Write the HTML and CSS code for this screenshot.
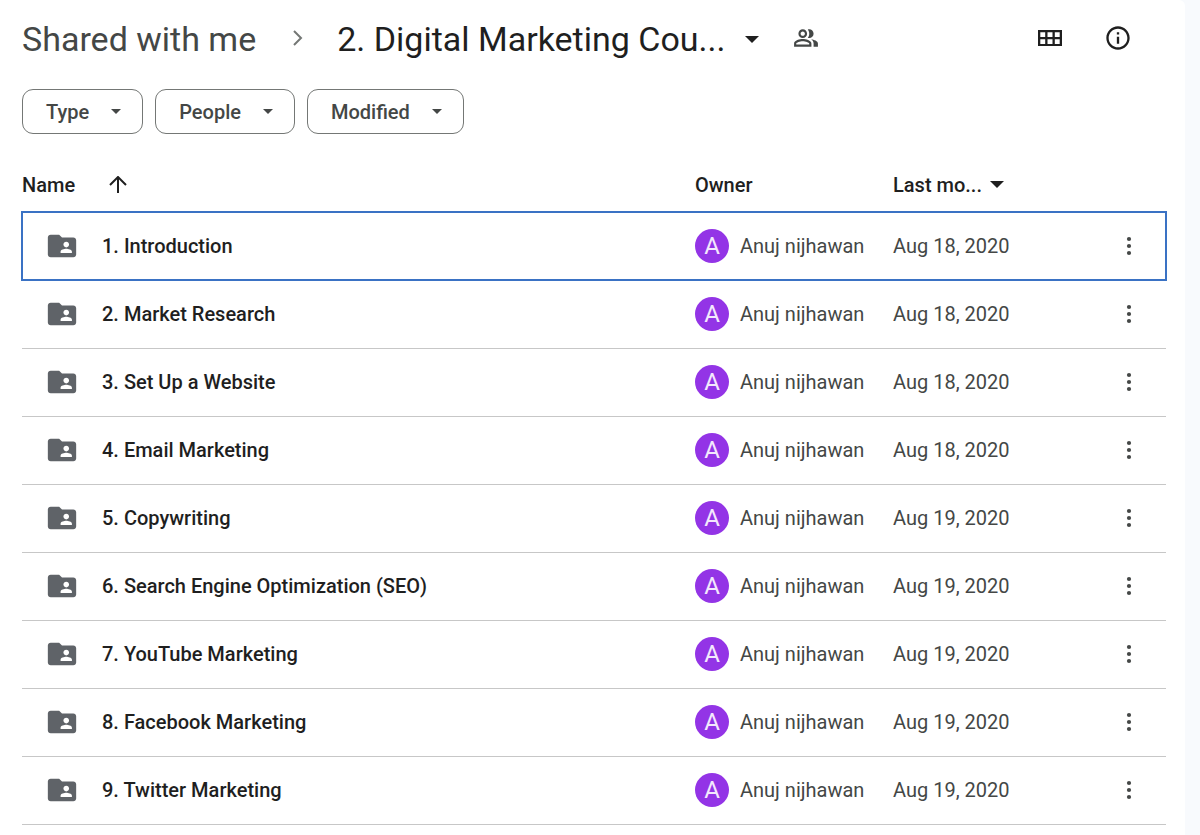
FILE: index.html
```html
<!DOCTYPE html>
<html lang="en">
  <head>
    <title>Shared with me</title>
    <meta charset="utf-8" />
    <link rel="stylesheet" href="styles.css">
  </head>
  <body>
    <!-- icons used more than once -->
    <svg class="sprite" aria-hidden="true">
      <symbol id="folder" viewBox="0 0 24 24">
        <path d="M20 6h-8l-2-2H4c-1.1 0-2 .9-2 2v12c0 1.1.9 2 2 2h16c1.1 0 2-.9 2-2V8c0-1.1-.9-2-2-2zm-5 3c1.1 0 2 .9 2 2s-.9 2-2 2-2-.9-2-2 .9-2 2-2zm4 8h-8v-1c0-1.33 2.67-2 4-2s4 .67 4 2v1z" />
      </symbol>
      <symbol id="more" viewBox="0 0 24 24">
        <circle cx="12" cy="6" r="1.8" />
        <circle cx="12" cy="12" r="1.8" />
        <circle cx="12" cy="18" r="1.8" />
      </symbol>
      <symbol id="caret" viewBox="0 0 10 5">
        <path d="M0 0h10L5 5z" />
      </symbol>
    </svg>

    <main class="panel">
      <header class="topbar">
        <nav class="crumbs">
          <a class="crumb" href="#">Shared with me</a>
          <svg class="chevron" viewBox="0 0 10 16"><path d="M1 1l7 7-7 7" /></svg>
          <button class="crumb current">
            2. Digital Marketing Cou...
            <svg class="caret-lg"><use href="#caret" /></svg>
          </button>
          <button class="icon-btn people" aria-label="Manage access">
            <svg class="icon-sm" viewBox="0 0 24 24">
              <path d="M16.67 13.13C18.04 14.06 19 15.32 19 17v3h4v-3c0-2.18-3.57-3.47-6.33-3.87zM15 12c2.21 0 4-1.79 4-4s-1.79-4-4-4c-.47 0-.91.1-1.33.24C14.5 5.27 15 6.58 15 8s-.5 2.73-1.33 3.76c.42.14.86.24 1.33.24zM9 12c2.21 0 4-1.79 4-4s-1.79-4-4-4-4 1.79-4 4 1.79 4 4 4zm0-6c1.1 0 2 .9 2 2s-.9 2-2 2-2-.9-2-2 .9-2 2-2zM9 13c-2.67 0-8 1.34-8 4v3h16v-3c0-2.66-5.33-4-8-4zm6 5H3v-.99C3.2 16.29 6.3 15 9 15s5.8 1.29 6 2v1z" />
            </svg>
          </button>
        </nav>
        <div class="actions">
          <button class="icon-btn" aria-label="Grid view">
            <svg class="icon" viewBox="0 0 28 28">
              <path d="M2 6h24v16H2zM4.300 8.200v4.700h4.900v-4.700zM11.500 8.200v4.700h5v-4.700zM18.800 8.200v4.700h4.900v-4.700zM4.300 15.200v4.700h4.900v-4.700zM11.500 15.200v4.700h5v-4.700zM18.800 15.200v4.700h4.900v-4.700z" fill-rule="evenodd" />
            </svg>
          </button>
          <button class="icon-btn" aria-label="View details">
            <svg class="icon" viewBox="0 0 24 24">
              <path d="M11 7h2v2h-2zm0 4h2v6h-2zm1-9C6.480 2 2 6.480 2 12s4.480 10 10 10 10-4.480 10-10S17.520 2 12 2zm0 18c-4.410 0-8-3.590-8-8s3.590-8 8-8 8 3.590 8 8-3.590 8-8 8z" />
            </svg>
          </button>
        </div>
      </header>

      <div class="filters">
        <button class="chip">Type <svg class="caret"><use href="#caret" /></svg></button>
        <button class="chip">People <svg class="caret"><use href="#caret" /></svg></button>
        <button class="chip">Modified <svg class="caret"><use href="#caret" /></svg></button>
      </div>

      <table class="files">
        <thead>
          <tr>
            <th class="col-name">
              <button class="sort">
                Name
                <svg class="arrow" viewBox="0 0 18 18"><path d="M9 17V2M1 9l8-8 8 8" /></svg>
              </button>
            </th>
            <th class="col-owner">Owner</th>
            <th class="col-date">
              <button class="sort date">Last mo... <svg class="caret-lg"><use href="#caret" /></svg></button>
            </th>
            <th class="col-menu"></th>
          </tr>
        </thead>
        <tbody>
          <tr class="selected">
            <td><a class="file" href="#"><svg class="folder"><use href="#folder" /></svg>1. Introduction</a></td>
            <td><div class="owner"><span class="avatar">A</span>Anuj nijhawan</div></td>
            <td>Aug 18, 2020</td>
            <td><button class="icon-btn" aria-label="More actions"><svg class="icon"><use href="#more" /></svg></button></td>
          </tr>
          <tr>
            <td><a class="file" href="#"><svg class="folder"><use href="#folder" /></svg>2. Market Research</a></td>
            <td><div class="owner"><span class="avatar">A</span>Anuj nijhawan</div></td>
            <td>Aug 18, 2020</td>
            <td><button class="icon-btn" aria-label="More actions"><svg class="icon"><use href="#more" /></svg></button></td>
          </tr>
          <tr>
            <td><a class="file" href="#"><svg class="folder"><use href="#folder" /></svg>3. Set Up a Website</a></td>
            <td><div class="owner"><span class="avatar">A</span>Anuj nijhawan</div></td>
            <td>Aug 18, 2020</td>
            <td><button class="icon-btn" aria-label="More actions"><svg class="icon"><use href="#more" /></svg></button></td>
          </tr>
          <tr>
            <td><a class="file" href="#"><svg class="folder"><use href="#folder" /></svg>4. Email Marketing</a></td>
            <td><div class="owner"><span class="avatar">A</span>Anuj nijhawan</div></td>
            <td>Aug 18, 2020</td>
            <td><button class="icon-btn" aria-label="More actions"><svg class="icon"><use href="#more" /></svg></button></td>
          </tr>
          <tr>
            <td><a class="file" href="#"><svg class="folder"><use href="#folder" /></svg>5. Copywriting</a></td>
            <td><div class="owner"><span class="avatar">A</span>Anuj nijhawan</div></td>
            <td>Aug 19, 2020</td>
            <td><button class="icon-btn" aria-label="More actions"><svg class="icon"><use href="#more" /></svg></button></td>
          </tr>
          <tr>
            <td><a class="file" href="#"><svg class="folder"><use href="#folder" /></svg>6. Search Engine Optimization (SEO)</a></td>
            <td><div class="owner"><span class="avatar">A</span>Anuj nijhawan</div></td>
            <td>Aug 19, 2020</td>
            <td><button class="icon-btn" aria-label="More actions"><svg class="icon"><use href="#more" /></svg></button></td>
          </tr>
          <tr>
            <td><a class="file" href="#"><svg class="folder"><use href="#folder" /></svg>7. YouTube Marketing</a></td>
            <td><div class="owner"><span class="avatar">A</span>Anuj nijhawan</div></td>
            <td>Aug 19, 2020</td>
            <td><button class="icon-btn" aria-label="More actions"><svg class="icon"><use href="#more" /></svg></button></td>
          </tr>
          <tr>
            <td><a class="file" href="#"><svg class="folder"><use href="#folder" /></svg>8. Facebook Marketing</a></td>
            <td><div class="owner"><span class="avatar">A</span>Anuj nijhawan</div></td>
            <td>Aug 19, 2020</td>
            <td><button class="icon-btn" aria-label="More actions"><svg class="icon"><use href="#more" /></svg></button></td>
          </tr>
          <tr>
            <td><a class="file" href="#"><svg class="folder"><use href="#folder" /></svg>9. Twitter Marketing</a></td>
            <td><div class="owner"><span class="avatar">A</span>Anuj nijhawan</div></td>
            <td>Aug 19, 2020</td>
            <td><button class="icon-btn" aria-label="More actions"><svg class="icon"><use href="#more" /></svg></button></td>
          </tr>
        </tbody>
      </table>
    </main>
  </body>
</html>
```
FILE: styles.css
```css
* {
  box-sizing: border-box;
}
body {
  margin: 0;
  background-color: #f8fafd;
  font-family: Roboto, "Open Sans", sans-serif;
  font-size: 20px;
  color: #1f1f1f;
}
a {
  color: inherit;
  text-decoration: none;
}
button {
  padding: 0;
  border: none;
  background: none;
  font: inherit;
  color: inherit;
  cursor: pointer;
}
svg {
  display: block;
  flex: none;
  fill: currentColor;
}
.sprite {
  display: none;
}

.panel {
  min-height: 100vh;
  margin-right: 15px;
  padding: 14px 19px 0 22px;
  background-color: #fff;
  border-top-right-radius: 6px;
}

/* breadcrumbs and view buttons */
.topbar {
  display: flex;
  justify-content: space-between;
  align-items: center;
  height: 48px;
}
.crumbs {
  display: flex;
  align-items: center;
}
.crumb {
  padding-top: 2px;
  font-size: 34px;
  line-height: 48px;
  color: #444746;
  white-space: nowrap;
}
.current {
  display: flex;
  align-items: center;
  gap: 20px;
  color: #1f1f1f;
}
.chevron {
  width: 10px;
  height: 16px;
  margin: 0 34px 0 37px;
  fill: none;
  stroke: #747775;
  stroke-width: 2;
}
.people {
  margin-left: 34px;
  color: #444746;
}
.actions {
  display: flex;
  gap: 40px;
  padding-right: 34px;
}
.icon-btn {
  display: block;
}
.icon {
  width: 28px;
  height: 28px;
}
.icon-sm {
  width: 26px;
  height: 26px;
}
.caret {
  width: 10px;
  height: 5px;
}
.caret-lg {
  width: 14px;
  height: 7px;
}

/* filter chips */
.filters {
  display: flex;
  gap: 12px;
  margin: 27px 0 29px;
}
.chip {
  display: flex;
  align-items: center;
  gap: 22px;
  height: 45px;
  padding: 0 21px 0 23px;
  border: 1px solid #747775;
  border-radius: 11px;
  font-weight: 500;
  color: #444746;
}

/* file list */
.files {
  width: 100%;
  table-layout: fixed;
  border-collapse: collapse;
}
.files th {
  height: 49px;
  padding: 0 0 6px;
  text-align: left;
  font-weight: 500;
}
.files td {
  height: 68px;
  padding: 0;
  border-bottom: 1px solid #c7c7c7;
  color: #444746;
}
.col-owner {
  width: 198px;
}
.col-date {
  width: 222px;
}
.col-menu {
  width: 51px;
}
.sort {
  display: flex;
  align-items: center;
  gap: 34px;
}
.date {
  gap: 8px;
}
.arrow {
  width: 18px;
  height: 18px;
  fill: none;
  stroke: currentColor;
  stroke-width: 2;
}
.selected {
  outline: 2px solid #3a72c4;
  outline-offset: -1px;
}
.file {
  display: flex;
  align-items: center;
  gap: 23px;
  padding-left: 23px;
  font-weight: 500;
  color: #1f1f1f;
}
.folder {
  width: 34px;
  height: 34px;
  fill: #5f6368;
}
.owner {
  display: flex;
  align-items: center;
  gap: 11px;
}
.avatar {
  width: 34px;
  height: 34px;
  border-radius: 50%;
  background-color: #9334e6;
  color: #f3e8fd;
  font-size: 24px;
  line-height: 34px;
  text-align: center;
}
```
